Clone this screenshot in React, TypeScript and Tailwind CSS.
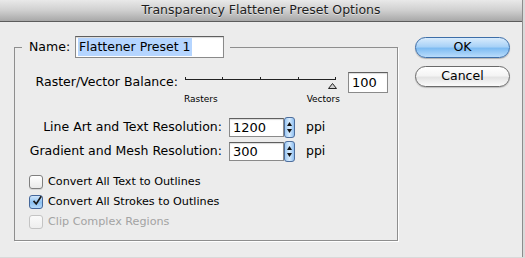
import React from "react";

const FONT = { fontFamily: '"DejaVu Sans", "Liberation Sans", Arial, sans-serif' };

function AquaButton({ label, primary = false }: { label: string; primary?: boolean }): JSX.Element {
  return (
    <button
      type="button"
      className={
        primary
          ? "h-[21px] w-[95px] rounded-full border border-[#3d6ea8] bg-[linear-gradient(to_bottom,#d8ebfc_0%,#a9d2f7_45%,#7fbcf2_55%,#b9dcfb_100%)] text-[12.5px] leading-none text-black shadow-[0_1px_1px_rgba(0,0,0,0.25)]"
          : "h-[21px] w-[95px] rounded-full border border-[#6b6b6b] bg-[linear-gradient(to_bottom,#ffffff_0%,#f4f4f4_45%,#e4e4e4_55%,#fbfbfb_100%)] text-[12.5px] leading-none text-black shadow-[0_1px_1px_rgba(0,0,0,0.2)]"
      }
    >
      {label}
    </button>
  );
}

function Spinner(): JSX.Element {
  return (
    <div className="flex h-[21px] w-[11px] flex-col items-center justify-center gap-[3px] rounded-[3px] border border-[#4e6e9c] bg-[linear-gradient(to_right,#9cc8f3,#d7ebfd_50%,#8fbff0)]">
      <svg width="5" height="4" viewBox="0 0 5 4">
        <path d="M2.5 0 L5 4 L0 4 Z" fill="#111" />
      </svg>
      <svg width="5" height="4" viewBox="0 0 5 4">
        <path d="M0 0 L5 0 L2.5 4 Z" fill="#111" />
      </svg>
    </div>
  );
}

function NumberField({ value, width }: { value: string; width: string }): JSX.Element {
  return (
    <div
      className={`${width} flex h-[19px] items-center border border-[#8a8a8a] border-t-[#5f5f5f] bg-white pl-[3px] text-[13px] leading-none text-black shadow-[inset_0_1px_1px_rgba(0,0,0,0.15)]`}
    >
      {value}
    </div>
  );
}

function Checkbox({
  label,
  checked = false,
  disabled = false,
}: {
  label: string;
  checked?: boolean;
  disabled?: boolean;
}): JSX.Element {
  return (
    <div className="flex h-[20px] items-center pl-[7px]">
      <div
        className={
          checked
            ? "flex h-[14px] w-[14px] items-center justify-center rounded-[3px] border border-[#45679a] bg-[linear-gradient(to_bottom,#cfe5fb,#8ec2f2_55%,#b7daf9)]"
            : disabled
              ? "h-[14px] w-[14px] rounded-[3px] border border-[#c4c4c4] bg-[linear-gradient(to_bottom,#fafafa,#eeeeee)]"
              : "h-[14px] w-[14px] rounded-[3px] border border-[#7f7f7f] bg-[linear-gradient(to_bottom,#ffffff,#e9e9e9)] shadow-[0_1px_0_rgba(0,0,0,0.1)]"
        }
      >
        {checked && (
          <svg width="13" height="13" viewBox="0 0 13 13" className="-mt-[3px] ml-[2px]">
            <path d="M2 7 L5.5 11 L12 1" fill="none" stroke="#1b1b1b" strokeWidth="2.2" />
          </svg>
        )}
      </div>
      <span className={`ml-[5px] text-[11.2px] ${disabled ? "text-[#a3a3a3]" : "text-black"}`}>{label}</span>
    </div>
  );
}

function BalanceSlider(): JSX.Element {
  const ticks = [2, 39, 77, 115, 152];
  return (
    <svg width="160" height="20" viewBox="0 0 160 20">
      <line x1="2" y1="7.5" x2="152" y2="7.5" stroke="#222" strokeWidth="1" />
      {ticks.map((t) => (
        <line key={t} x1={t + 0.5} y1="5" x2={t + 0.5} y2="8" stroke="#222" strokeWidth="1" />
      ))}
      <path d="M149.5 11.5 L153.5 16.5 L145.5 16.5 Z" fill="#d0d0d0" stroke="#222" strokeWidth="1" />
    </svg>
  );
}

export default function App(): JSX.Element {
  return (
    <div className="flex h-[258px] w-[525px] overflow-hidden bg-[#d9d9d9]" style={FONT}>
      <div className="flex h-[257px] w-[523px] flex-col border-r border-[#8c8c8c] bg-[#ececec]">
        <div className="flex h-[22px] shrink-0 items-center justify-center border-b border-[#5c5c5c] bg-[linear-gradient(to_bottom,#e9e9e9,#cfcfcf_50%,#a8a8a8)] text-[12.5px] text-[#1e1e1e] [text-shadow:0_1px_0_rgba(255,255,255,0.5)]">
          Transparency Flattener Preset Options
        </div>

        <div className="flex flex-1 pl-[14px] pt-[14px]">
          <fieldset className="h-[205px] w-[384px] border border-[#8e8e8e] pl-[7px] shadow-[1px_1px_0_#fff]">
            <legend className="flex h-[22px] items-center pl-[7px] pr-[6px]">
              <span className="text-[12.5px] text-black">Name:</span>
              <div className="ml-[5px] flex h-[22px] w-[149px] items-center border border-[#8a8a8a] border-t-[#5f5f5f] bg-white pl-[2px] shadow-[inset_0_1px_1px_rgba(0,0,0,0.15)]">
                <span className="bg-[#b5d5ff] px-[1px] text-[12.5px] leading-[18px] text-black">Flattener Preset 1</span>
              </div>
            </legend>

            <div className="mt-[14px] flex h-[20px] items-start">
              <div className="flex h-[20px] w-[156px] items-center justify-end text-[12.5px] text-black">
                Raster/Vector Balance:
              </div>
              <div className="ml-[5px]">
                <BalanceSlider />
              </div>
              <div className="ml-[5px]">
                <NumberField value="100" width="w-[40px] h-[21px]" />
              </div>
            </div>
            <div className="mt-[2px] flex h-[10px] w-[318px] items-center justify-between pl-[162px] text-[9px] leading-[10px] text-black">
              <span>Rasters</span>
              <span>Vectors</span>
            </div>

            <div className="mt-[12px] flex flex-col gap-[2px]">
              {[
                ["Line Art and Text Resolution:", "1200"],
                ["Gradient and Mesh Resolution:", "300"],
              ].map(([label, value]) => (
                <div key={label} className="flex h-[22px] items-center">
                  <div className="w-[200px] text-right text-[12.5px] text-black">{label}</div>
                  <div className="ml-[7px]">
                    <NumberField value={value} width="w-[55px]" />
                  </div>
                  <Spinner />
                  <span className="ml-[11px] text-[12.5px] text-black">ppi</span>
                </div>
              ))}
            </div>

            <div className="mt-[10px] flex flex-col">
              <Checkbox label="Convert All Text to Outlines" />
              <Checkbox label="Convert All Strokes to Outlines" checked />
              <Checkbox label="Clip Complex Regions" disabled />
            </div>
          </fieldset>

          <div className="ml-[17px] mt-[1px] flex flex-col gap-[8px]">
            <AquaButton label="OK" primary />
            <AquaButton label="Cancel" />
          </div>
        </div>
      </div>
    </div>
  );
}
